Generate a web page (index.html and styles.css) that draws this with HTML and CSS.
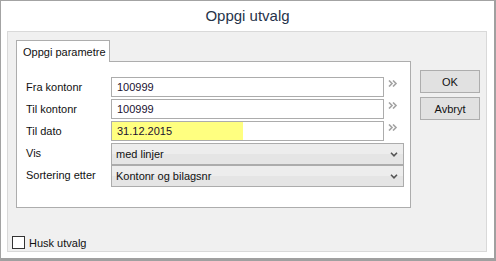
FILE: index.html
```html
<!DOCTYPE html>
<html lang="no">
<head>
    <meta charset="UTF-8">
    <title>Oppgi utvalg</title>
    <link rel="stylesheet" href="styles.css">
</head>
<body>
    <div class="window">
        <div class="titlebar">Oppgi utvalg</div>
        <div class="panel">
            <div class="main">
                <div class="tabs">
                    <div class="tab-strip">
                        <div class="tab active">Oppgi parametre</div>
                    </div>
                    <div class="tab-page">
                        <div class="form">
                            <div class="label">Fra kontonr</div>
                            <div class="field">100999</div>
                            <div class="lookup">
                                <svg width="10" height="7" viewBox="0 0 10 7"><path d="M1 .5l3 3-3 3M5 .5l3 3-3 3" fill="none" stroke="#a3a3a3" stroke-width="1.6"/></svg>
                            </div>

                            <div class="label">Til kontonr</div>
                            <div class="field">100999</div>
                            <div class="lookup">
                                <svg width="10" height="7" viewBox="0 0 10 7"><path d="M1 .5l3 3-3 3M5 .5l3 3-3 3" fill="none" stroke="#a3a3a3" stroke-width="1.6"/></svg>
                            </div>

                            <div class="label">Til dato</div>
                            <div class="field date"><span class="highlight">31.12.2015</span></div>
                            <div class="lookup">
                                <svg width="10" height="7" viewBox="0 0 10 7"><path d="M1 .5l3 3-3 3M5 .5l3 3-3 3" fill="none" stroke="#a3a3a3" stroke-width="1.6"/></svg>
                            </div>

                            <div class="label">Vis</div>
                            <div class="dropdown">
                                <span>med linjer</span>
                                <svg width="8" height="5" viewBox="0 0 8 5"><path d="M1 .8l3 3 3-3" fill="none" stroke="#555" stroke-width="1.6"/></svg>
                            </div>

                            <div class="label">Sortering etter</div>
                            <div class="dropdown">
                                <span>Kontonr og bilagsnr</span>
                                <svg width="8" height="5" viewBox="0 0 8 5"><path d="M1 .8l3 3 3-3" fill="none" stroke="#555" stroke-width="1.6"/></svg>
                            </div>
                        </div>
                    </div>
                </div>
                <div class="actions">
                    <button class="dialog-button">OK</button>
                    <button class="dialog-button">Avbryt</button>
                </div>
            </div>
            <div class="remember">
                <span class="checkbox"></span>
                <span>Husk utvalg</span>
            </div>
        </div>
    </div>
</body>
</html>
```

FILE: styles.css
```css
* {
    box-sizing: border-box;
}

body {
    margin: 0;
    font-family: 'Liberation Sans', Arial, sans-serif;
    font-size: 11px;
    color: #111;
    background: #fff;
}

.window {
    width: 496px;
    height: 261px;
    background: #fff;
    border-top: 1px solid #a3a3a3;
    border-left: 1px solid #a3a3a3;
    border-right: 2px solid #a0a0a0;
    border-bottom: 3px solid #a0a0a0;
    display: flex;
    flex-direction: column;
}

.titlebar {
    height: 30px;
    text-align: center;
    font-size: 15px;
    line-height: 30px;
    color: #26334a;
}

.panel {
    margin-left: 6px;
    width: 480px;
    height: 221px;
    background: #f0f0f0;
    border: 1px solid #d9d9d9;
    padding: 8px 0 0 8px;
}

.main {
    display: flex;
    align-items: flex-start;
}

.tab-strip {
    display: flex;
}

.tab {
    position: relative;
    z-index: 1;
    width: 94px;
    height: 22px;
    margin-bottom: -1px;
    padding: 5px 0 0 6px;
    background: #fff;
    border: 1px solid #adadad;
    border-bottom: none;
    color: #111;
}

.tab-page {
    width: 395px;
    height: 147px;
    background: #fff;
    border: 1px solid #adadad;
    padding: 15px 0 0 9px;
}

.form {
    display: grid;
    grid-template-columns: 85px 273px 20px;
    grid-auto-rows: 22px;
}

.label {
    line-height: 20px;
    color: #111;
}

.field {
    height: 20px;
    border: 1px solid #acacac;
    background: #fff;
    line-height: 18px;
    padding-left: 5px;
    color: #1a1030;
}

.field.date {
    padding-left: 0;
}

.highlight {
    display: inline-block;
    width: 131px;
    height: 18px;
    padding-left: 5px;
    background: #ffff80;
}

.lookup {
    display: flex;
    padding: 3px 0 0 4px;
}

.dropdown {
    grid-column: 2 / 4;
    display: flex;
    align-items: center;
    justify-content: space-between;
    height: 22px;
    padding: 0 5px 0 4px;
    border: 1px solid #acacac;
    background: linear-gradient(#ededed 50%, #e5e5e5 50%);
    color: #111;
}

.actions {
    display: flex;
    flex-direction: column;
    gap: 4px;
    margin: 30px 0 0 9px;
}

.dialog-button {
    width: 60px;
    height: 23px;
    padding: 0;
    border: 1px solid #adadad;
    background: #e1e1e1;
    font-family: 'Liberation Sans', Arial, sans-serif;
    font-size: 11px;
    color: #111;
}

.remember {
    display: flex;
    align-items: center;
    gap: 4px;
    margin: 28px 0 0 -4px;
    height: 13px;
}

.checkbox {
    width: 13px;
    height: 13px;
    border: 1px solid #333;
    background: #fff;
}
```
